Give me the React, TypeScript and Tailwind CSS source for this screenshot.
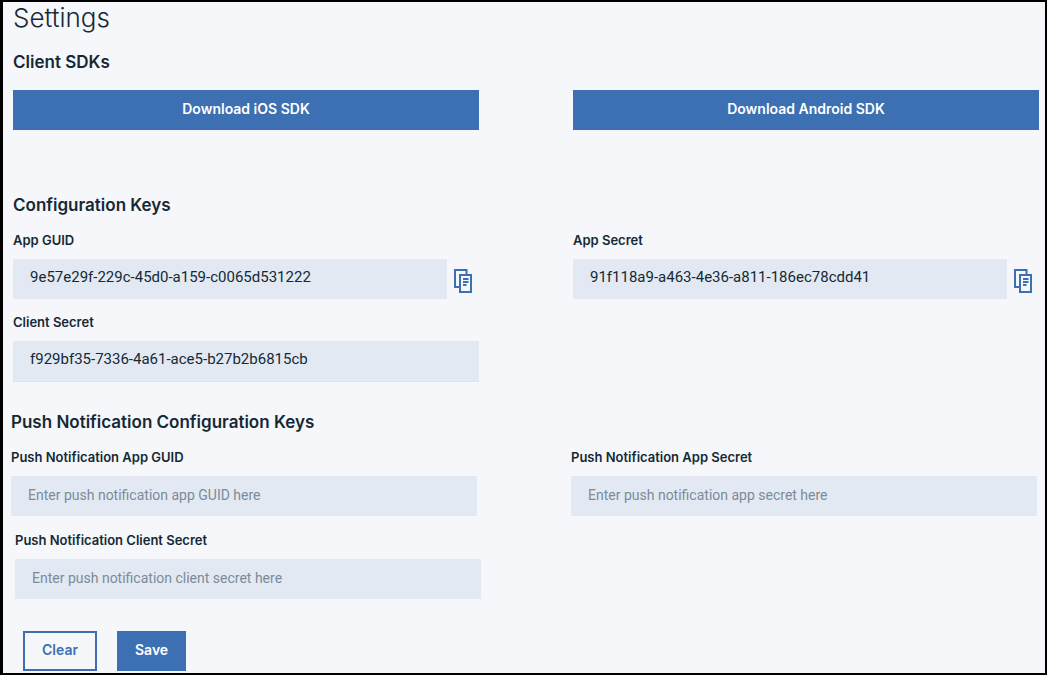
import type { InputHTMLAttributes, ReactNode } from 'react';

function CopyIcon() {
  return (
    <svg width="19" height="25" viewBox="0 0 19 25" fill="none" aria-hidden="true" stroke="#3d70b2" strokeWidth="2">
      <path d="M5 18H1V1H12.5V5" />
      <path d="M6 6H17V23H6Z" />
      <path d="M9 10H14.5M9 13H14.5M9 16H12.5" />
    </svg>
  );
}

type FieldProps = InputHTMLAttributes<HTMLInputElement> & {
  id: string;
  label: string;
  copyable?: boolean;
  underlined?: boolean;
};

function Field({ id, label, copyable, underlined, ...input }: FieldProps) {
  return (
    <div className="flex flex-col gap-[9px]">
      <label htmlFor={id} className="text-[13px] leading-5 font-semibold">
        {label}
      </label>
      <div className={underlined ? 'flex border-b border-[#dde3e8]' : 'flex'}>
        <input
          id={id}
          type="text"
          className="h-10 min-w-0 flex-1 bg-[#e2e9f3] px-[17px] pb-1 font-[Roboto,sans-serif] text-[15px] text-[#152934] outline-none placeholder:text-[#7c8b98] placeholder-shown:pb-0.5 placeholder-shown:text-sm"
          {...input}
        />
        {copyable && (
          <button type="button" aria-label={`Copy ${label}`} className="flex w-8 items-center justify-center pt-1">
            <CopyIcon />
          </button>
        )}
      </div>
    </div>
  );
}

function Heading({ children }: { children: ReactNode }) {
  return <h2 className="text-[17px] leading-6 font-semibold">{children}</h2>;
}

const downloadButton = 'h-10 bg-[#3d70b2] pb-0.5 text-sm font-semibold text-white';

export default function App() {
  return (
    <main className="border-2 border-l-[3px] border-black bg-[#f5f7fb] pb-0.5 font-[Inter,sans-serif] text-[#152934]">
      <section className="pr-1.5 pl-2.5">
        <h1 className="text-[26px] leading-8 font-light">Settings</h1>
        <div className="mt-4">
          <Heading>Client SDKs</Heading>
        </div>
        <div className="mt-4 grid grid-cols-2 gap-x-[94px]">
          <button type="button" className={downloadButton}>Download iOS SDK</button>
          <button type="button" className={downloadButton}>Download Android SDK</button>
        </div>
      </section>

      <section className="mt-[63px] pr-1.5 pl-2.5">
        <Heading>Configuration Keys</Heading>
        <div className="mt-[13px] grid grid-cols-2 gap-x-[94px] gap-y-[13px]">
          <Field id="app-guid" label="App GUID" defaultValue="9e57e29f-229c-45d0-a159-c0065d531222" readOnly copyable />
          <Field id="app-secret" label="App Secret" defaultValue="91f118a9-a463-4e36-a811-186ec78cdd41" readOnly copyable />
          <Field id="client-secret" label="Client Secret" defaultValue="f929bf35-7336-4a61-ace5-b27b2b6815cb" readOnly underlined />
        </div>
      </section>

      <form className="mt-7" onSubmit={(e) => e.preventDefault()}>
        <div className="px-2">
          <Heading>Push Notification Configuration Keys</Heading>
          <div className="mt-[13px] grid grid-cols-2 gap-x-[94px]">
            <Field id="push-guid" label="Push Notification App GUID" placeholder="Enter push notification app GUID here" />
            <Field id="push-secret" label="Push Notification App Secret" placeholder="Enter push notification app secret here" />
          </div>
        </div>
        <div className="mt-3.5 grid grid-cols-2 gap-x-[94px] pr-1 pl-3">
          <Field id="push-client" label="Push Notification Client Secret" placeholder="Enter push notification client secret here" />
        </div>
        <div className="mt-8 flex gap-5 pl-5">
          <button type="reset" className="h-10 border-2 border-[#3d70b2] px-[17px] pb-0.5 text-sm font-semibold text-[#3d70b2]">
            Clear
          </button>
          <button type="submit" className="h-10 bg-[#3d70b2] px-[18px] pb-0.5 text-sm font-semibold text-white">
            Save
          </button>
        </div>
      </form>
    </main>
  );
}
